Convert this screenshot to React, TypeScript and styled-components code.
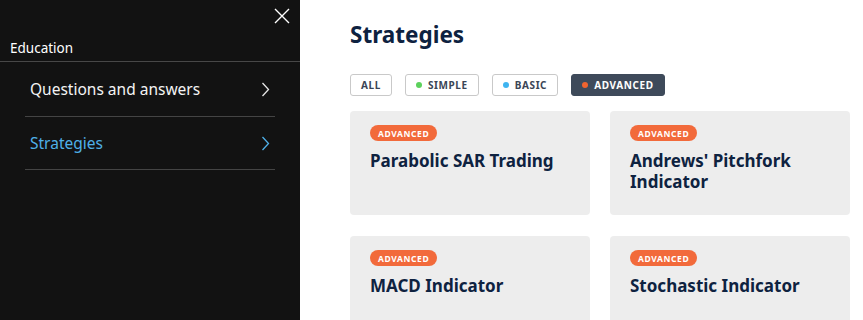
import { createGlobalStyle, styled } from "styled-components";

const GlobalStyle = createGlobalStyle`
  html, body {
    margin: 0;
    padding: 0;
    background: #ffffff;
    font-family: "Noto Sans", "Open Sans", sans-serif;
  }
  * {
    box-sizing: border-box;
  }
`;

type Level = "simple" | "basic" | "advanced";

const dotColors: Record<Level, string> = {
  simple: "#5cd15c",
  basic: "#3fb4f0",
  advanced: "#f0642f",
};

const filters: { label: string; level?: Level }[] = [
  { label: "ALL" },
  { label: "SIMPLE", level: "simple" },
  { label: "BASIC", level: "basic" },
  { label: "ADVANCED", level: "advanced" },
];

const strategies = [
  "Parabolic SAR Trading",
  "Andrews' Pitchfork Indicator",
  "MACD Indicator",
  "Stochastic Indicator",
];

const menu = [
  { label: "Questions and answers", active: false },
  { label: "Strategies", active: true },
];

const Chevron = ({ color }: { color: string }) => (
  <svg width="9" height="15" viewBox="0 0 9 15" fill="none">
    <path d="M1.5 1L7.5 7.5L1.5 14" stroke={color} strokeWidth="1.3" />
  </svg>
);

const CloseIcon = () => (
  <svg width="16" height="16" viewBox="0 0 16 16" fill="none">
    <path d="M1 1L15 15M15 1L1 15" stroke="#ffffff" strokeWidth="1.4" />
  </svg>
);

export default function App() {
  const selected = "ADVANCED";

  return (
    <Page>
      <GlobalStyle />
      <Sidebar>
        <CloseRow>
          <CloseButton>
            <CloseIcon />
          </CloseButton>
        </CloseRow>
        <SectionTitle>Education</SectionTitle>
        <Menu>
          {menu.map((item) => (
            <MenuItem key={item.label} active={item.active}>
              <span>{item.label}</span>
              <Chevron color={item.active ? "#4fb0e8" : "#e6e6e6"} />
            </MenuItem>
          ))}
        </Menu>
      </Sidebar>
      <Main>
        <Title>Strategies</Title>
        <Filters>
          {filters.map((f) => (
            <Chip key={f.label} selected={f.label === selected}>
              {f.level && <Dot color={dotColors[f.level]} />}
              {f.label}
            </Chip>
          ))}
        </Filters>
        <Grid>
          {strategies.map((name) => (
            <Card key={name}>
              <Badge>ADVANCED</Badge>
              <CardTitle>{name}</CardTitle>
            </Card>
          ))}
        </Grid>
      </Main>
    </Page>
  );
}

const Page = styled.div`
  display: flex;
  width: 863px;
  height: 320px;
  overflow: hidden;
`;

const Sidebar = styled.aside`
  width: 300px;
  flex-shrink: 0;
  background: #121212;
  color: #ffffff;
  display: flex;
  flex-direction: column;
`;

const CloseRow = styled.div`
  display: flex;
  justify-content: flex-end;
  padding: 7px 10px 0 0;
  height: 38px;
`;

const CloseButton = styled.div`
  width: 16px;
  height: 16px;
  cursor: pointer;
`;

const SectionTitle = styled.div`
  font-size: 13.5px;
  line-height: 20px;
  padding: 0 10px 4px;
  border-bottom: 1px solid #474747;
  height: 24px;
`;

const Menu = styled.nav`
  display: flex;
  flex-direction: column;
  padding: 0 25px;
`;

const MenuItem = styled.div<{ active?: boolean }>`
  display: flex;
  align-items: center;
  justify-content: space-between;
  height: 53px;
  padding: 0 5px;
  border-bottom: 1px solid #444444;
  font-size: 15.5px;
  color: ${({ active }) => (active ? "#4fb0e8" : "#f4f4f4")};
  cursor: pointer;

  &:first-child {
    height: 55px;
  }
`;

const Main = styled.main`
  flex: 1;
  padding: 21px 13px 0 50px;
  display: flex;
  flex-direction: column;
`;

const Title = styled.h1`
  margin: 0;
  font-size: 22.5px;
  line-height: 28px;
  font-weight: 700;
  color: #0e2240;
`;

const Filters = styled.div`
  display: flex;
  gap: 13px;
  margin-top: 25px;
`;

const Chip = styled.div<{ selected?: boolean }>`
  display: flex;
  align-items: center;
  gap: 6px;
  height: 22px;
  padding: 0 10px;
  border-radius: 3px;
  border: 1px solid ${({ selected }) => (selected ? "#3e4a5a" : "#c9c9c9")};
  background: ${({ selected }) => (selected ? "#3e4a5a" : "#ffffff")};
  color: ${({ selected }) => (selected ? "#ffffff" : "#3a4556")};
  font-size: 10px;
  font-weight: 700;
  letter-spacing: 0.6px;
  cursor: pointer;
`;

const Dot = styled.span<{ color: string }>`
  width: 6px;
  height: 6px;
  border-radius: 50%;
  background: ${({ color }) => color};
`;

const Grid = styled.div`
  display: grid;
  grid-template-columns: 240px 240px;
  column-gap: 20px;
  row-gap: 21px;
  margin-top: 15px;
`;

const Card = styled.div`
  height: 104px;
  background: #ededed;
  border-radius: 4px;
  padding: 14px 20px;
  display: flex;
  flex-direction: column;
  align-items: flex-start;
  cursor: pointer;
`;

const Badge = styled.span`
  display: inline-flex;
  align-items: center;
  height: 16px;
  padding: 0 8px;
  border-radius: 8px;
  background: #f26a3b;
  color: #ffffff;
  font-size: 8.5px;
  font-weight: 700;
  letter-spacing: 0.6px;
`;

const CardTitle = styled.div`
  margin-top: 9px;
  font-size: 17px;
  line-height: 21px;
  font-weight: 700;
  color: #0e2240;
`;
